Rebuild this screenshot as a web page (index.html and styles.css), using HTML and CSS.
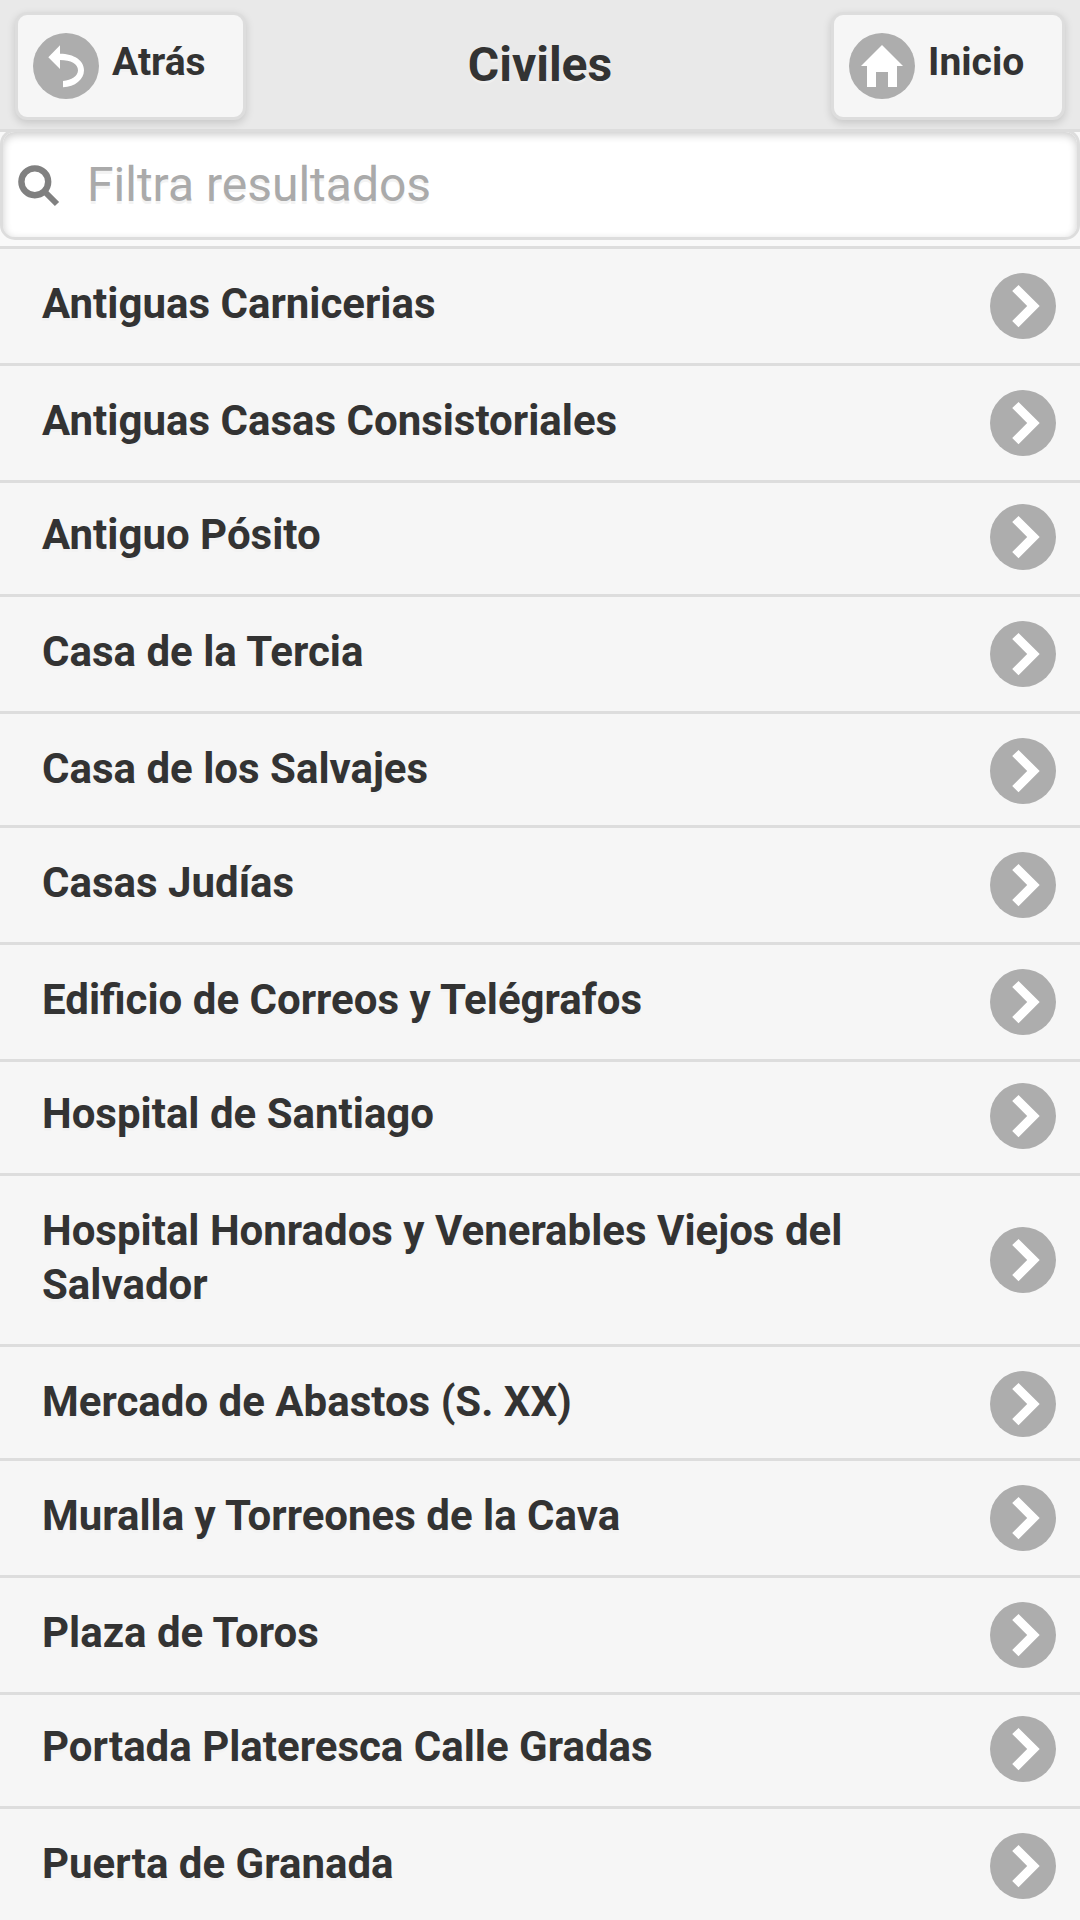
FILE: index.html
```html
<!DOCTYPE html>
<html lang="es">
<head>
<meta charset="utf-8">
<title>Civiles</title>
<link rel="stylesheet" href="styles.css">
</head>
<body>
<svg class="defs" width="0" height="0">
  <symbol id="carat" viewBox="0 0 66 66"><circle cx="33" cy="33" r="33"/><path fill="#fff" d="M28.500 12 49.700 33 28.500 54.300 22.200 48 37.200 33 22.200 18Z"/></symbol>
  <symbol id="back" viewBox="0 0 66 66"><circle cx="33" cy="33" r="33"/><path fill="#fff" d="M15.300 24.200 27 12.300V20.800C41 20.800 51 27.500 51 37.200C51 46.500 42 53.800 30 54.200V48C38.500 47.200 45 43 45 37.200C45 31 38 27 27 27V36Z"/></symbol>
  <symbol id="home" viewBox="0 0 66 66"><circle cx="33" cy="33" r="33"/><path fill="#fff" d="M33 12 54 33H48V54H39V39H27V54H18V33H12Z"/></symbol>
</svg>
<header class="header">
  <a class="button"><svg class="disc"><use href="#back"/></svg><span>Atrás</span></a>
  <h1 class="title">Civiles</h1>
  <a class="button home"><svg class="disc"><use href="#home"/></svg><span>Inicio</span></a>
</header>
<div class="search">
  <svg class="lens" viewBox="0 0 42 42"><circle cx="16.800" cy="16.800" r="13.400" fill="none" stroke="#808080" stroke-width="6.400"/><path d="M26 26 39 39" stroke="#808080" stroke-width="6"/></svg>
  <span>Filtra resultados</span>
</div>
<ul class="list">
  <li class="row"><span>Antiguas Carnicerias</span><svg class="disc"><use href="#carat"/></svg></li>
  <li class="row"><span>Antiguas Casas Consistoriales</span><svg class="disc"><use href="#carat"/></svg></li>
  <li class="row short raised"><span>Antiguo Pósito</span><svg class="disc"><use href="#carat"/></svg></li>
  <li class="row"><span>Casa de la Tercia</span><svg class="disc"><use href="#carat"/></svg></li>
  <li class="row short"><span>Casa de los Salvajes</span><svg class="disc"><use href="#carat"/></svg></li>
  <li class="row"><span>Casas Judías</span><svg class="disc"><use href="#carat"/></svg></li>
  <li class="row"><span>Edificio de Correos y Telégrafos</span><svg class="disc"><use href="#carat"/></svg></li>
  <li class="row short raised"><span>Hospital de Santiago</span><svg class="disc"><use href="#carat"/></svg></li>
  <li class="row double"><span>Hospital Honrados y Venerables Viejos del Salvador</span><svg class="disc"><use href="#carat"/></svg></li>
  <li class="row short"><span>Mercado de Abastos (S. XX)</span><svg class="disc"><use href="#carat"/></svg></li>
  <li class="row"><span>Muralla y Torreones de la Cava</span><svg class="disc"><use href="#carat"/></svg></li>
  <li class="row"><span>Plaza de Toros</span><svg class="disc"><use href="#carat"/></svg></li>
  <li class="row short raised"><span>Portada Plateresca Calle Gradas</span><svg class="disc"><use href="#carat"/></svg></li>
  <li class="row"><span>Puerta de Granada</span><svg class="disc"><use href="#carat"/></svg></li>
</ul>
</body>
</html>
```
FILE: styles.css
```css
* { box-sizing: border-box; }
body {
  margin: 0;
  height: 1920px;
  overflow: hidden;
  background: #f9f9f9;
  color: #333;
  font-family: Roboto, sans-serif;
  text-shadow: 0 3px 0 #f3f3f3;
}
.defs { position: absolute; }
.disc { flex: none; width: 66px; height: 66px; fill: #adadad; }
.header {
  display: flex;
  justify-content: space-between;
  align-items: flex-start;
  height: 132px;
  padding: 12px 15px 0;
  background: #e9e9e9;
  border-bottom: 3px solid #ddd;
  text-shadow: 0 3px 0 #eee;
}
.button {
  display: flex;
  gap: 13px;
  width: 231px;
  height: 108px;
  padding: 18px 15px;
  border: 3px solid #ddd;
  border-radius: 12px;
  background: #f6f6f6;
  box-shadow: 0 3px 9px rgba(0, 0, 0, .15);
  font-size: 39px;
  font-weight: 700;
  line-height: 58px;
  text-shadow: 0 3px 0 #f3f3f3;
}
.button.home { width: 234px; }
.title {
  margin: 0;
  padding-left: 3px;
  font-size: 48px;
  font-weight: 700;
  line-height: 106px;
}
.search {
  display: flex;
  align-items: center;
  gap: 27px;
  height: 111px;
  margin-top: -3px;
  padding: 3px 15px 0;
  background: #fff;
  border: 3px solid #ddd;
  border-radius: 15px;
  box-shadow: inset 0 3px 9px rgba(0, 0, 0, .2);
  color: #aaa;
  font-size: 48px;
}
.search span { padding-bottom: 4px; }
.lens { width: 42px; height: 42px; }
.list { margin: 6px 0 0; padding: 0; list-style: none; }
.row {
  display: flex;
  justify-content: space-between;
  align-items: flex-start;
  height: 117px;
  padding: 24px 24px 0 42px;
  background: #f6f6f6;
  border-top: 3px solid #ddd;
  font-size: 42px;
  font-weight: 700;
  line-height: 54px;
}
.short { height: 114px; }
.raised { padding-top: 21px; }
.double { height: 171px; }
.row span { max-width: 850px; padding-top: 4px; }
.double .disc { margin-top: 27px; }
```
